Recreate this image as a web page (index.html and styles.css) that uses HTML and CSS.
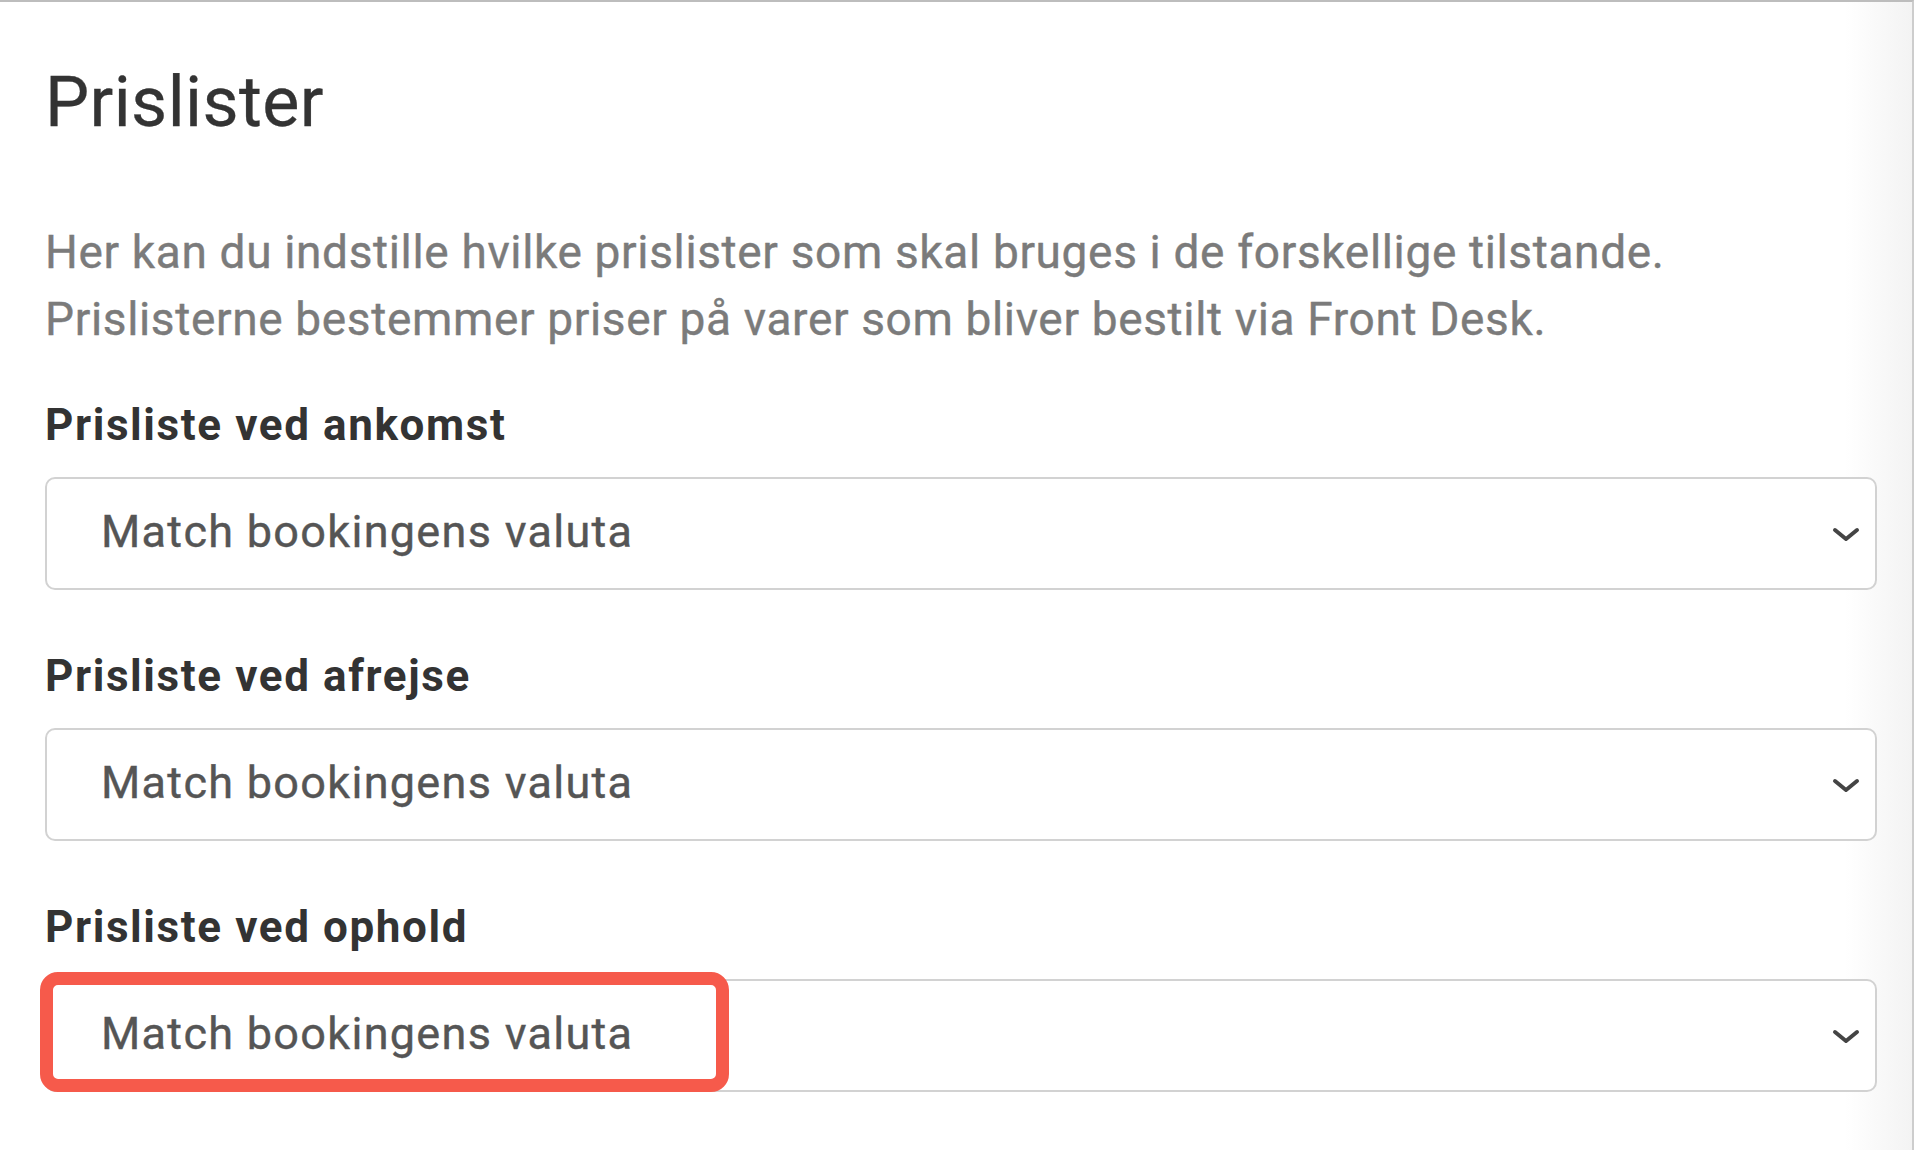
FILE: index.html
```html
<!DOCTYPE html>
<html lang="da">
<head>
    <meta charset="UTF-8">
    <meta name="viewport" content="width=device-width, initial-scale=1.0">
    <title>Prislister</title>
    <link rel="stylesheet" href="styles.css">
</head>
<body>
    <div class="page">
        <h1 class="title">Prislister</h1>
        <p class="intro">Her kan du indstille hvilke prislister som skal bruges i de forskellige tilstande.<br>Prislisterne bestemmer priser på varer som bliver bestilt via Front Desk.</p>

        <div class="field">
            <div class="label">Prisliste ved ankomst</div>
            <div class="select">
                <span class="value">Match bookingens valuta</span>
                <svg class="chev" width="28" height="16" viewBox="0 0 28 16"><path d="M3 3 L14 12 L25 3" fill="none" stroke="#444" stroke-width="4" stroke-linecap="round" stroke-linejoin="round"/></svg>
            </div>
        </div>

        <div class="field">
            <div class="label">Prisliste ved afrejse</div>
            <div class="select">
                <span class="value">Match bookingens valuta</span>
                <svg class="chev" width="28" height="16" viewBox="0 0 28 16"><path d="M3 3 L14 12 L25 3" fill="none" stroke="#444" stroke-width="4" stroke-linecap="round" stroke-linejoin="round"/></svg>
            </div>
        </div>

        <div class="field">
            <div class="label">Prisliste ved ophold</div>
            <div class="select">
                <span class="value">Match bookingens valuta</span>
                <svg class="chev" width="28" height="16" viewBox="0 0 28 16"><path d="M3 3 L14 12 L25 3" fill="none" stroke="#444" stroke-width="4" stroke-linecap="round" stroke-linejoin="round"/></svg>
                <!-- markering -->
                <div class="mark"></div>
            </div>
        </div>
    </div>
</body>
</html>
```
FILE: styles.css
```css
*{
    margin: 0;
    padding: 0;
    box-sizing: border-box;
}
html,body{
    background: #fff;
}
body{
    font-family: Roboto, "Liberation Sans", sans-serif;
}
.page{
    width: 1914px;
    height: 1150px;
    border-top: 2px solid #bdbdbd;
    border-right: 2px solid #cdcdcd;
    padding: 59px 35px 0 45px;
    background: linear-gradient(to right, #fff 1845px, #f3f3f3 1912px);
    overflow: hidden;
}
.title{
    font-size: 70px;
    line-height: 82px;
    font-weight: 400;
    letter-spacing: 0.4px;
    color: #333;
    -webkit-text-stroke: 0.3px #333;
}
.intro{
    margin-top: 76px;
    font-size: 46px;
    line-height: 67px;
    letter-spacing: 0.65px;
    color: #7b7b7b;
    -webkit-text-stroke: 0.4px #7b7b7b;
}
.field{
    margin-top: 46px;
}
.field + .field{
    margin-top: 60px;
}
.label{
    font-size: 44px;
    line-height: 52px;
    font-weight: 700;
    letter-spacing: 1.6px;
    color: #333;
}
.select{
    position: relative;
    margin-top: 26px;
    height: 113px;
    border: 2px solid #d2d2d2;
    border-radius: 10px;
    background: #fff;
    display: flex;
    align-items: center;
    justify-content: space-between;
    padding: 0 15px 4px 54px;
}
.value{
    font-size: 45px;
    line-height: 45px;
    letter-spacing: 1.3px;
    color: #555;
    -webkit-text-stroke: 0.4px #555;
}
.chev{
    margin-top: 6px;
}
.mark{
    position: absolute;
    left: -7px;
    top: -9px;
    width: 689px;
    height: 120px;
    border: 13px solid #f65a4b;
    border-radius: 18px;
}
```
